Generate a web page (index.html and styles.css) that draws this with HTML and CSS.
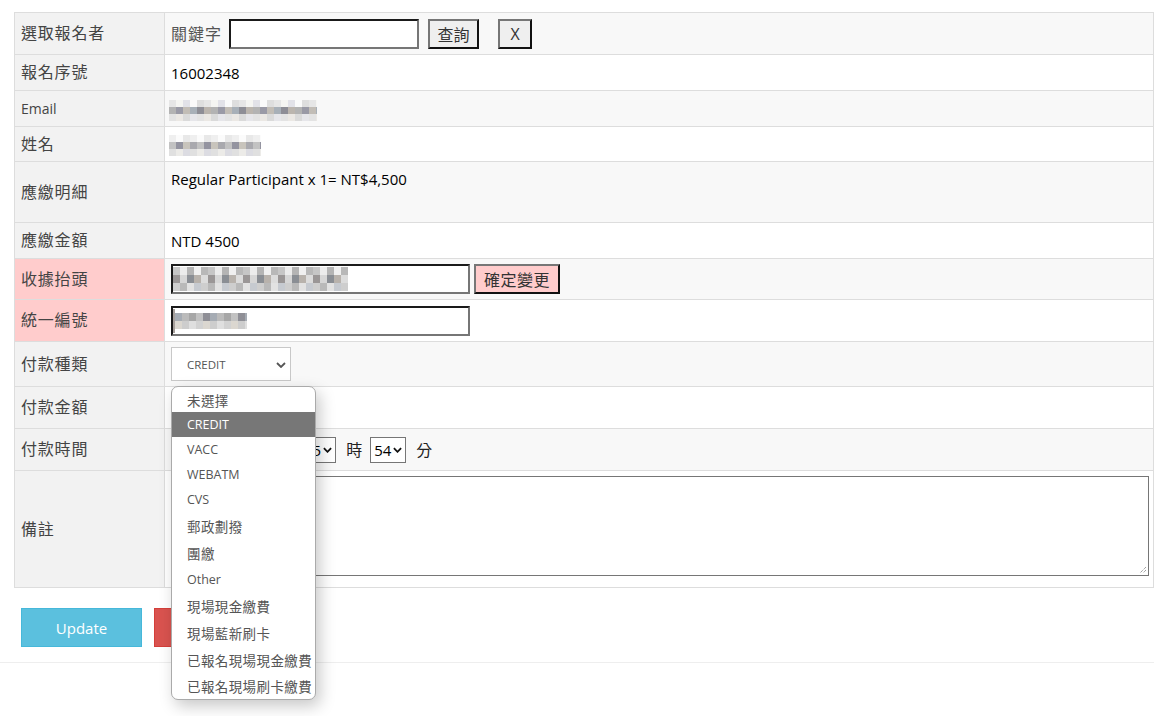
FILE: index.html
```html
<!DOCTYPE html>
<html lang="zh-Hant">
<head>
<meta charset="utf-8">
<title>報名資料</title>
<link rel="stylesheet" href="styles.css">
</head>
<body>
<div class="page">
  <table class="form">
    <tr class="r1 odd">
      <th>選取報名者</th>
      <td>
        <div class="line">
          <span class="cjk gray">關鍵字</span>
          <input class="inp kw" type="text">
          <button class="btn q">查詢</button>
          <button class="btn x">X</button>
        </div>
      </td>
    </tr>
    <tr class="r2">
      <th>報名序號</th>
      <td class="val">16002348</td>
    </tr>
    <tr class="r3 odd">
      <th class="latin">Email</th>
      <td><span class="mosaic m-email"></span></td>
    </tr>
    <tr class="r4">
      <th>姓名</th>
      <td><span class="mosaic m-name"></span></td>
    </tr>
    <tr class="r5 odd">
      <th>應繳明細</th>
      <td class="val top">Regular Participant x 1= NT$4,500</td>
    </tr>
    <tr class="r6">
      <th>應繳金額</th>
      <td class="val">NTD 4500</td>
    </tr>
    <tr class="r7 odd">
      <th class="pink">收據抬頭</th>
      <td>
        <div class="line">
          <div class="inp wide"><span class="mosaic m-title"></span></div>
          <button class="btn pinkbtn">確定變更</button>
        </div>
      </td>
    </tr>
    <tr class="r8">
      <th class="pink">統一編號</th>
      <td><div class="inp wide"><span class="caret"></span><span class="mosaic m-tax"></span></div></td>
    </tr>
    <tr class="r9 odd">
      <th>付款種類</th>
      <td>
        <div class="sel-main">CREDIT<svg class="chev" viewBox="0 0 10 6" width="10" height="6"><path d="M1 1l4 4 4-4" fill="none" stroke="#555" stroke-width="1.8"/></svg></div>
      </td>
    </tr>
    <tr class="r10">
      <th>付款金額</th>
      <td></td>
    </tr>
    <tr class="r11 odd">
      <th>付款時間</th>
      <td>
        <div class="line time">
          <div class="date"></div>
          <div class="sm hour"><span class="hidden-digit">1</span>5<svg viewBox="0 0 10 6" width="9" height="6"><path d="M1 1l4 4 4-4" fill="none" stroke="#111" stroke-width="2"/></svg></div>
          <span class="unit">時</span>
          <div class="sm">54<svg viewBox="0 0 10 6" width="9" height="6"><path d="M1 1l4 4 4-4" fill="none" stroke="#111" stroke-width="2"/></svg></div>
          <span class="unit">分</span>
        </div>
      </td>
    </tr>
    <tr class="r12">
      <th>備註</th>
      <td class="tacell"><div class="ta"><svg class="grip" viewBox="0 0 8 8" width="8" height="8"><path d="M7 1L1 7M7 4L4 7" stroke="#777" stroke-width="1" stroke-dasharray="1 1"/></svg></div></td>
    </tr>
  </table>

  <div class="actions">
    <button class="abtn update">Update</button>
    <button class="abtn back"></button>
  </div>
  <div class="rule"></div>

  <ul class="dropdown">
    <li class="h25 cjk-i">未選擇</li>
    <li class="h25 hl">CREDIT</li>
    <li class="h25">VACC</li>
    <li class="h25">WEBATM</li>
    <li class="h25">CVS</li>
    <li class="h27 cjk-i">郵政劃撥</li>
    <li class="h27 cjk-i">團繳</li>
    <li class="h26">Other</li>
    <li class="h27 cjk-i">現場現金繳費</li>
    <li class="h27 cjk-i">現場藍新刷卡</li>
    <li class="h27 cjk-i">已報名現場現金繳費</li>
    <li class="h26 cjk-i">已報名現場刷卡繳費</li>
  </ul>
</div>
</body>
</html>
```

FILE: styles.css
```css
html, body {
  margin: 0;
  padding: 0;
  background: #fff;
}
body {
  font-family: "Open Sans", "Noto Sans CJK TC", sans-serif;
  color: #222;
  width: 1171px;
  height: 716px;
  overflow: hidden;
}
.page {
  position: relative;
  padding: 12px 17px 0 14px;
}
.form {
  width: 1140px;
  border-collapse: collapse;
  table-layout: fixed;
}
.form th, .form td {
  border: 1px solid #dddddd;
  padding: 0 0 0 6px;
  vertical-align: middle;
  text-align: left;
  box-sizing: border-box;
}
.form th {
  width: 150px;
  background: #f2f2f2;
  font-family: "Noto Sans CJK TC", sans-serif;
  font-weight: normal;
  font-size: 16px;
  letter-spacing: 0.8px;
  color: #444;
  padding-bottom: 3px;
}
.form th.latin {
  font-family: "Open Sans", sans-serif;
  font-size: 14px;
  letter-spacing: 0;
  padding-bottom: 1px;
}
.form th.pink { background: #ffcccc; }
.form tr.odd td { background: #f8f8f8; }
.form tr td { background: #fff; }
.r1 { height: 42px; }
.r2 { height: 36px; }
.r3 { height: 36px; }
.r4 { height: 35px; }
.r5 { height: 61px; }
.r6 { height: 36px; }
.r7 { height: 41px; }
.r8 { height: 42px; }
.r9 { height: 45px; }
.r10 { height: 42px; }
.r11 { height: 42px; }
.r12 { height: 117px; }

.val {
  font-size: 15px;
  color: #000;
}
.val.top {
  vertical-align: top;
  padding-top: 7px;
}
.line {
  display: flex;
  align-items: center;
}
.cjk { font-family: "Noto Sans CJK TC", sans-serif; }
.gray { color: #555; font-size: 16px; letter-spacing: 1px; padding-bottom: 2px; }
.inp {
  box-sizing: border-box;
  height: 30px;
  background: #fff;
  border: 2px solid;
  border-color: #1a1a1a #767676 #767676 #1a1a1a;
  padding: 0;
  margin: 0;
}
.kw { width: 190px; margin-left: 7px; }
.wide {
  width: 299px;
  display: flex;
  align-items: center;
  padding-left: 0;
}
.btn {
  box-sizing: border-box;
  height: 30px;
  border: 2px solid;
  border-color: #767676 #111 #111 #767676;
  background: #efefef;
  font-family: "Noto Sans CJK TC", sans-serif;
  font-size: 16px;
  color: #333;
  padding: 0 6px;
  margin: 0;
}
.btn.q { margin-left: 9px; width: 51px; }
.btn.x {
  margin-left: 19px;
  width: 34px;
  font-family: "Open Sans", sans-serif;
  font-weight: normal;
  font-size: 16px;
}
.btn.pinkbtn {
  margin-left: 4px;
  width: 86px;
  background: #ffcccc;
  letter-spacing: 0.5px;
}
.caret {
  width: 2px;
  height: 24px;
  background: #a7a09c;
}

/* pixelated redactions */
.mosaic {
  display: inline-block;
  vertical-align: middle;
  background-repeat: no-repeat;
}
.m-email {
  width: 148px;
  height: 21px;
  margin-left: -2px;
  margin-top: 2px;
  background-size: 100% 7px;
  background-position: 0 0, 0 7px, 0 14px;
  background-image:
    repeating-linear-gradient(90deg, #e6e6e6 0 7px, #f5f5f2 7px 14px, #e2e2e8 14px 21px, #fafafa 21px 28px, #dedede 28px 35px),
    repeating-linear-gradient(90deg, #b3b3b3 0 7px, #9a9aa6 7px 14px, #c2bdb6 14px 21px, #a8b0b8 21px 28px, #8e8e96 28px 35px, #bbb5ae 35px 42px),
    repeating-linear-gradient(90deg, #e3e3e3 0 7px, #ebe8e4 7px 14px, #dadada 14px 21px, #e6e6ea 21px 28px);
}
.m-name {
  width: 92px;
  height: 21px;
  margin-left: -2px;
  margin-top: 2px;
  background-size: 100% 7px;
  background-position: 0 0, 0 7px, 0 14px;
  background-image:
    repeating-linear-gradient(90deg, #efefef 0 7px, #fbfbfb 7px 14px, #e8e8e8 14px 21px),
    repeating-linear-gradient(90deg, #c2c2c2 0 7px, #9494a0 7px 14px, #c8c4bc 14px 21px, #a9a9ae 21px 28px),
    repeating-linear-gradient(90deg, #e0e0e0 0 7px, #ecebe8 7px 14px, #dcdce2 14px 21px);
}
.m-title {
  width: 175px;
  height: 24px;
  background-size: 100% 8px;
  background-position: 0 0, 0 8px, 0 16px;
  background-image:
    repeating-linear-gradient(90deg, #c6c6c6 0 7px, #ececec 7px 14px, #b4b4b4 14px 21px, #f0f0f0 21px 28px, #b8b8b8 28px 35px),
    repeating-linear-gradient(90deg, #9a9696 0 7px, #d6d6d6 7px 14px, #8a8e94 14px 21px, #b8b2ac 21px 28px, #dcdcdc 28px 35px),
    repeating-linear-gradient(90deg, #cecece 0 7px, #b9b9b9 7px 14px, #e2e2e2 14px 21px, #c6cad0 21px 28px);
}
.m-tax {
  width: 72px;
  height: 16px;
  background-size: 100% 8px;
  background-position: 0 0, 0 8px;
  background-image:
    repeating-linear-gradient(90deg, #a6acb4 0 7px, #bbbbbb 7px 14px, #a7a7a7 14px 21px, #c2c2c2 21px 28px, #8f8f96 28px 35px),
    repeating-linear-gradient(90deg, #dbd7d0 0 7px, #cdcdcd 7px 14px, #dfdfdf 14px 21px, #d2d2d2 21px 28px);
}

.sel-main {
  box-sizing: border-box;
  width: 120px;
  height: 34px;
  border: 1px solid #c8c8c8;
  background: #fff;
  display: flex;
  align-items: center;
  padding-left: 15px;
  font-size: 11.5px;
  color: #555;
  position: relative;
}
.chev { position: absolute; right: 4px; top: 14px; }

.time { gap: 0; }
.date {
  box-sizing: border-box;
  width: 120px;
  height: 26px;
  border: 1px solid #767676;
  background: #fff;
}
.sm {
  box-sizing: border-box;
  height: 26px;
  border: 1px solid #767676;
  display: flex;
  align-items: center;
  gap: 2px;
  padding: 0 3px 0 3px;
  font-size: 15px;
  color: #000;
  background: #fff;
}
.hidden-digit { color: #000; }
.hour { margin-left: 7px; }
.unit {
  font-family: "Noto Sans CJK TC", sans-serif;
  font-size: 16px;
  color: #222;
  margin: 0 4px 0 9px;
  padding-bottom: 2px;
}
.unit + .sm { margin-left: 4px; }
.sm + .unit { margin-left: 10px; }
.tacell.tacell { vertical-align: top; padding-top: 5px; }
.ta {
  box-sizing: border-box;
  width: 978px;
  height: 100px;
  border: 1px solid #767676;
  background: #fff;
  position: relative;
}
.grip { position: absolute; right: 1px; bottom: 1px; }

.actions {
  display: flex;
  gap: 12px;
  padding: 20px 0 0 7px;
}
.abtn {
  box-sizing: border-box;
  width: 121px;
  height: 39px;
  border: 1px solid;
  color: #fff;
  font-family: "Open Sans", sans-serif;
  font-size: 15px;
  margin: 0;
}
.update { background: #5bc0de; border-color: #46b8da; }
.back { background: #d9534f; border-color: #d43f3a; }
.rule {
  margin: 15px 0 0 -14px;
  width: 1154px;
  border-top: 1px solid #eeeeee;
}

.dropdown {
  position: absolute;
  left: 171px;
  top: 386px;
  width: 145px;
  box-sizing: border-box;
  margin: 0;
  padding: 0;
  list-style: none;
  background: #fff;
  border: 1px solid #aaaaaa;
  border-radius: 7px;
  box-shadow: 4px 6px 16px rgba(0,0,0,0.22);
  overflow: hidden;
}
.dropdown li {
  padding-left: 15px;
  font-size: 12.5px;
  color: #555;
  display: flex;
  align-items: center;
  white-space: nowrap;
}
.dropdown li.cjk-i {
  font-family: "Noto Sans CJK TC", sans-serif;
  font-size: 13.5px;
  letter-spacing: 0.4px;
}
.dropdown li.hl { background: #777777; color: #fff; }
.h25 { height: 25px; }
.h26 { height: 26px; }
.h27 { height: 27px; }
```
